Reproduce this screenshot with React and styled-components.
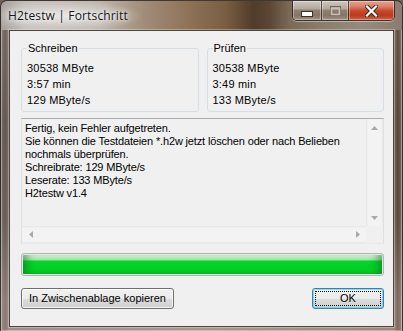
import React from 'react';
import styled, { createGlobalStyle, css } from 'styled-components';

const GlobalStyle = createGlobalStyle`
  html, body {
    margin: 0;
    padding: 0;
    background: #6f6358;
  }
  * {
    box-sizing: border-box;
  }
`;

const UI_FONT = `"Liberation Sans", Arial, sans-serif`;

const Window = styled.div`
  width: 403px;
  height: 331px;
  overflow: hidden;
  display: flex;
  flex-direction: column;
  padding: 0 8px;
  border: 1px solid rgba(30, 24, 20, 0.75);
  border-bottom: none;
  border-radius: 7px 7px 0 0;
  box-shadow: inset 0 0 0 1px rgba(255, 255, 255, 0.35);
  background:
    linear-gradient(to bottom, rgba(0,0,0,0) 0px, rgba(0,0,0,0) 30px,
      rgba(60,48,40,0.25) 120px, rgba(70,56,46,0.2) 220px, rgba(200,170,170,0.3) 300px),
    linear-gradient(to right, #8d847e 0%, #6f635c 1%, #8e8580 2%, #9a9088 50%, #8c7a68 98%, #5d4c3c 99%, #8c7c6c 100%);
`;

const TitleBar = styled.div`
  height: 29px;
  margin: 0 -8px;
  padding: 0 7px 0 7px;
  display: flex;
  justify-content: space-between;
  align-items: flex-start;
  border-radius: 6px 6px 0 0;
  background:
    radial-gradient(ellipse 80px 16px at 62px 15px, rgba(235,235,235,0.9), rgba(220,220,220,0) 100%),
    linear-gradient(to right, #a7a09c 0%, #c4beba 6%, #bdb3aa 25%, #a08c78 36%, #8e7256 47%, #7a5e42 56%, #4f3c2a 63%, #5b4733 67%, #7c6a58 72%, #8b7c6c 80%, #978a7e 90%, #8a7c70 100%);
`;

const Title = styled.div`
  margin-top: 7px;
  font-family: "Open Sans", "Noto Sans", sans-serif;
  font-size: 12px;
  line-height: 16px;
  letter-spacing: 0.15px;
  color: #151515;
  text-shadow: 0 0 6px rgba(255, 255, 255, 0.95), 0 0 3px rgba(255, 255, 255, 0.9);
`;

const CaptionButtons = styled.div`
  display: flex;
  height: 20px;
  border: 1px solid rgba(40, 30, 24, 0.8);
  border-top: none;
  border-radius: 0 0 5px 5px;
  overflow: hidden;
  box-shadow: 0 1px 0 rgba(255, 255, 255, 0.4);
`;

const CapBtn = styled.div`
  display: flex;
  align-items: center;
  justify-content: center;
  width: ${(p) => p.$w}px;
  height: 100%;
  border-left: ${(p) => (p.$first ? 'none' : '1px solid rgba(40, 30, 24, 0.7)')};
  box-shadow: inset 0 0 0 1px rgba(255, 255, 255, 0.35);
  ${(p) =>
    p.$close
      ? css`
          background: linear-gradient(to bottom, #e6a291 0%, #d8806a 30%, #c94a2e 50%, #b93a1e 75%, #d2603f 100%);
        `
      : css`
          background: linear-gradient(to bottom, #cfc8c1 0%, #b3a89d 40%, #8f8072 50%, #857565 75%, #a09282 100%);
        `}
`;

const Client = styled.div`
  height: 297px;
  display: flex;
  flex-direction: column;
  padding: 11px 9px 0 11px;
  background: #f0f0f0;
  border: 1px solid #4e443c;
  box-shadow: 0 0 0 1px rgba(255, 255, 255, 0.3);
  font-family: ${UI_FONT};
  font-size: 11px;
  color: #000;
`;

const GroupRow = styled.div`
  display: grid;
  grid-template-columns: 1fr 1fr;
  gap: 8px;
`;

const Group = styled.fieldset`
  margin: 0;
  min-width: 0;
  padding: 0 5px 3px 5px;
  border: 1px solid #d5dfe5;
  border-radius: 3px;
`;

const Legend = styled.legend`
  padding: 0 1px;
  line-height: 13px;
  margin-bottom: 5px;
`;

const Line = styled.div`
  line-height: 16px;
  white-space: nowrap;
  letter-spacing: 0.2px;
`;

const TextBox = styled.div`
  margin-top: 6px;
  height: 126px;
  display: grid;
  grid-template-columns: 1fr 17px;
  grid-template-rows: 1fr 17px;
  border: 1px solid #dbdfe6;
  border-top-color: #abadb3;
  border-bottom-color: #e3e9ef;
  background: #f0f0f0;
`;

const TextArea = styled.div`
  padding: 3px 3px;
  line-height: 13px;
  letter-spacing: -0.15px;
  white-space: nowrap;
  overflow: hidden;
`;

const ScrollTrack = styled.div`
  display: flex;
  flex-direction: ${(p) => (p.$vertical ? 'column' : 'row')};
  justify-content: space-between;
  background: ${(p) =>
    p.$vertical
      ? 'linear-gradient(to right, #e4e4e4 0px, #f3f3f3 2px, #f3f3f3 15px, #e9e9e9 17px)'
      : 'linear-gradient(to bottom, #e4e4e4 0px, #f3f3f3 2px, #f3f3f3 15px, #e9e9e9 17px)'};
`;

const ArrowBtn = styled.div`
  width: 17px;
  height: 17px;
  display: flex;
  align-items: center;
  justify-content: center;
`;

const Corner = styled.div`
  background: #f0f0f0;
`;

const Progress = styled.div`
  margin-top: 9px;
  height: 23px;
  border: 1px solid #b4b4b4;
  border-radius: 3px;
  padding: 1px;
  background: #e6e6e6;
`;

const ProgressFill = styled.div`
  height: 100%;
  border-radius: 1px;
  background: linear-gradient(to bottom, #e4f8e4 0%, #c0eec0 14%, #9ae49a 27%, #07d32c 31%, #00cf26 80%, #02c424 100%);
  box-shadow: inset 9px 0 8px -5px rgba(10, 110, 30, 0.55), inset -9px 0 8px -5px rgba(10, 110, 30, 0.55);
`;

const ButtonRow = styled.div`
  margin-top: 12px;
  display: flex;
  justify-content: space-between;
`;

const Button = styled.div`
  width: ${(p) => p.$w}px;
  height: 21px;
  padding: 2px;
  display: flex;
  border: 1px solid ${(p) => (p.$default ? '#3c7fb1' : '#707070')};
  border-radius: 3px;
  background: linear-gradient(to bottom, #f2f2f2 0%, #ebebeb 50%, #dddddd 50%, #cfcfcf 100%);
  box-shadow: inset 0 0 0 1px ${(p) => (p.$default ? 'rgba(72, 216, 251, 0.7)' : 'rgba(255, 255, 255, 0.75)')};
  line-height: 13px;
`;

const ButtonLabel = styled.span`
  flex: 1;
  display: flex;
  align-items: center;
  justify-content: center;
  border: 1px ${(p) => (p.$focus ? 'dotted #000' : 'solid transparent')};
`;

const Arrow = ({ dir }) => {
  const pts = {
    up: '0,4 3.5,0 7,4',
    down: '0,0 3.5,4 7,0',
    left: '4,0 0,3.5 4,7',
    right: '0,0 4,3.5 0,7',
  }[dir];
  const vert = dir === 'up' || dir === 'down';
  return (
    <svg width={vert ? 7 : 4} height={vert ? 4 : 7} viewBox={vert ? '0 0 7 4' : '0 0 4 7'}>
      <polygon points={pts} fill="#a9a9a9" />
    </svg>
  );
};

const MinIcon = () => (
  <svg width="12" height="6" viewBox="0 0 12 6" style={{ marginTop: 6 }}>
    <rect x="0.5" y="0.5" width="11" height="5" fill="#fff" stroke="#3a3028" />
  </svg>
);

const MaxIcon = () => (
  <svg width="11" height="10" viewBox="0 0 11 10">
    <rect x="0.5" y="0.5" width="10" height="9" fill="none" stroke="#6e6258" />
    <rect x="1.5" y="2.5" width="8" height="6" fill="none" stroke="#c9c0b8" strokeWidth="1.6" />
  </svg>
);

const CloseIcon = () => (
  <svg width="13" height="12" viewBox="0 0 13 12">
    <path d="M2 1.5 L11 10.5 M11 1.5 L2 10.5" stroke="#3a2a24" strokeWidth="4.2" strokeLinecap="square" />
    <path d="M2 1.5 L11 10.5 M11 1.5 L2 10.5" stroke="#fff" strokeWidth="2.2" strokeLinecap="square" />
  </svg>
);

const stats = [
  { title: 'Schreiben', lines: ['30538 MByte', '3:57 min', '129 MByte/s'] },
  { title: 'Prüfen', lines: ['30538 MByte', '3:49 min', '133 MByte/s'] },
];

const log = [
  'Fertig, kein Fehler aufgetreten.',
  'Sie können die Testdateien *.h2w jetzt löschen oder nach Belieben',
  'nochmals überprüfen.',
  'Schreibrate: 129 MByte/s',
  'Leserate: 133 MByte/s',
  'H2testw v1.4',
];

const App = () => {
  return (
    <>
      <GlobalStyle />
      <Window>
        <TitleBar>
          <Title>H2testw | Fortschritt</Title>
          <CaptionButtons>
            <CapBtn $w={28} $first>
              <MinIcon />
            </CapBtn>
            <CapBtn $w={27}>
              <MaxIcon />
            </CapBtn>
            <CapBtn $w={46} $close>
              <CloseIcon />
            </CapBtn>
          </CaptionButtons>
        </TitleBar>
        <Client>
          <GroupRow>
            {stats.map((s) => (
              <Group key={s.title}>
                <Legend>{s.title}</Legend>
                {s.lines.map((l, i) => (
                  <Line key={i}>{l}</Line>
                ))}
              </Group>
            ))}
          </GroupRow>
          <TextBox>
            <TextArea>
              {log.map((l, i) => (
                <div key={i}>{l}</div>
              ))}
            </TextArea>
            <ScrollTrack $vertical>
              <ArrowBtn><Arrow dir="up" /></ArrowBtn>
              <ArrowBtn><Arrow dir="down" /></ArrowBtn>
            </ScrollTrack>
            <ScrollTrack>
              <ArrowBtn><Arrow dir="left" /></ArrowBtn>
              <ArrowBtn><Arrow dir="right" /></ArrowBtn>
            </ScrollTrack>
            <Corner />
          </TextBox>
          <Progress>
            <ProgressFill style={{ width: '100%' }} />
          </Progress>
          <ButtonRow>
            <Button $w={153}>
              <ButtonLabel>In Zwischenablage kopieren</ButtonLabel>
            </Button>
            <Button $w={72} $default>
              <ButtonLabel $focus>OK</ButtonLabel>
            </Button>
          </ButtonRow>
        </Client>
      </Window>
    </>
  );
};

export default App;
